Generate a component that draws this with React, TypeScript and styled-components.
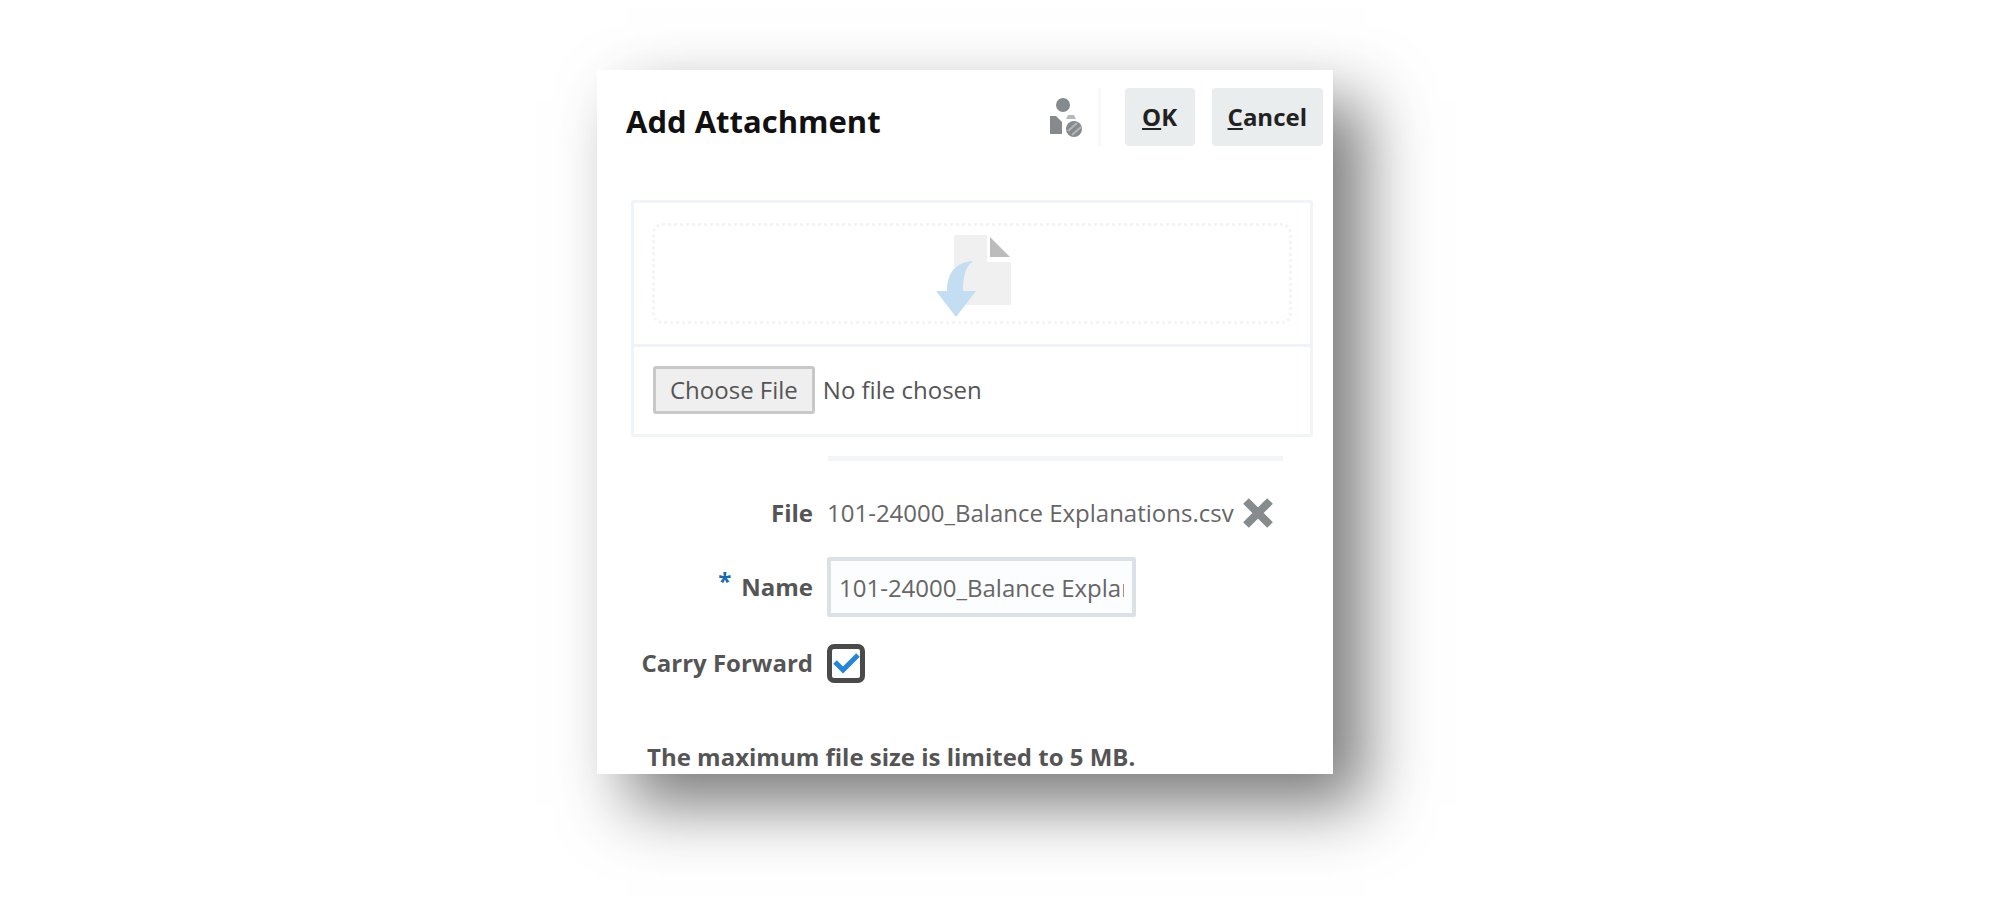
import React, { useRef, useState } from "react";
import styled, { createGlobalStyle } from "styled-components";

const GlobalStyle = createGlobalStyle`
  *, *::before, *::after { box-sizing: border-box; }
  body {
    margin: 0;
    background: #fff;
    color: #555;
    font-family: "Open Sans", "Noto Sans", sans-serif;
    font-size: 24px;
    line-height: 32px;
  }
  button, input { font: inherit; color: inherit; }
`;

const Page = styled.main`
  display: grid;
  grid-template-columns: 597fr 736fr 667fr;
  padding: 70px 0 140px;
`;

const Dialog = styled.section`
  grid-column: 2;
  background: #fff;
  padding-bottom: 1px;
  box-shadow: 31px 31px 62px rgba(51, 51, 51, 0.65);
`;

const Header = styled.header`
  display: flex;
  align-items: center;
  padding: 18px 10px 0 29px;
`;

const Title = styled.h1`
  flex: 1;
  margin: 0;
  padding-top: 8px;
  color: #111;
  font-size: 31px;
  line-height: 40px;
  font-weight: 700;
`;

const HeaderIcon = styled.svg`
  width: 36px;
  height: 44px;
  margin: 4px 14px 0 0;
`;

const Separator = styled.span`
  width: 3px;
  height: 58px;
  margin-right: 24px;
  background: #f7f8f9;
`;

const ActionButton = styled.button`
  height: 58px;
  min-width: 70px;
  padding: 0 16px;
  border: 0;
  border-radius: 4px;
  background: #e9edee;
  color: #222;
  font-weight: 700;

  & + & { margin-left: 17px; }
`;

const Upload = styled.div`
  margin: 54px 20px 0 34px;
  border: 3px solid #f0f3f7;
  border-radius: 3px;
`;

const DropZone = styled.div`
  display: flex;
  justify-content: center;
  margin: 20px 18px;
  height: 101px;
  padding: 8px 0 0 6px;
  border: 3px dotted #f2f5f8;
  border-radius: 10px;
`;

const DropIcon = styled.svg`
  width: 78px;
  height: 84px;
`;

const Picker = styled.div`
  display: flex;
  align-items: center;
  gap: 8px;
  padding: 19px 19px 20px;
  border-top: 3px solid #f0f3f7;
`;

const ChooseButton = styled.button`
  height: 48px;
  padding: 0 14px;
  border: 3px solid #c8c8c8;
  border-radius: 3px;
  background: #efefef;
`;

const Rule = styled.hr`
  margin: 19px 50px 8px 231px;
  border: 0;
  border-top: 5px solid #f3f5f7;
`;

const Fields = styled.div`
  display: grid;
  grid-template-columns: 216px 1fr;
  column-gap: 14px;
  align-items: center;
`;

const Label = styled.label`
  text-align: right;
  font-weight: 700;
`;

const Required = styled.span`
  position: relative;
  top: -6px;
  margin-right: 10px;
  color: #1668b0;
`;

const Row = styled.div<{ $height: number }>`
  display: flex;
  align-items: center;
  height: ${(p) => p.$height}px;
  color: #666;
`;

const RemoveButton = styled.button`
  display: flex;
  margin-left: 8px;
  padding: 0;
  border: 0;
  background: none;
`;

const NameInput = styled.input`
  width: 309px;
  height: 60px;
  padding: 0 8px;
  border: 4px solid #dbe2e6;
  border-radius: 2px;
  background: #fcfdff;
  color: #666;
`;

const CheckBox = styled.span`
  position: relative;
  display: flex;

  input {
    appearance: none;
    width: 38px;
    height: 39px;
    margin: 0;
    border: 5px solid #4a4a4a;
    border-radius: 7px;
    background: #fff;
  }

  svg {
    position: absolute;
    inset: 0;
    pointer-events: none;
  }
`;

const Note = styled.p`
  margin: 32px 0 0 50px;
  font-weight: 700;
`;

export default function App() {
  const fileRef = useRef<HTMLInputElement>(null);
  const [chosen, setChosen] = useState("No file chosen");
  const [carry, setCarry] = useState(true);

  return (
    <>
      <GlobalStyle />
      <Page>
        <Dialog role="dialog" aria-labelledby="dialog-title">
          <Header>
            <Title id="dialog-title">Add Attachment</Title>
            <HeaderIcon viewBox="0 0 36 44" fill="#868a8d" aria-hidden="true">
              <circle cx="15" cy="8" r="7" />
              <path d="M2 19h6l6 6v12H2z" />
              <path d="M18 22l2-4h6l2 4z" opacity=".6" />
              <circle cx="26" cy="32" r="8" />
              <path d="M20 34l9-8M24 38l9-8" stroke="#b4b7b9" strokeWidth="2" />
            </HeaderIcon>
            <Separator />
            <ActionButton type="button"><u>O</u>K</ActionButton>
            <ActionButton type="button"><u>C</u>ancel</ActionButton>
          </Header>

          <Upload>
            <DropZone>
              <DropIcon viewBox="0 0 78 84" aria-hidden="true">
                <path d="M18 1h33v27h24v43H18z" fill="#f0f0f0" />
                <path d="M54 3l20 20H54z" fill="#bcbcbc" />
                <path d="M37 27C19 28 11 40 11 57H0l20 26 20-26H27c0-14 2-24 10-30z" fill="#c3ddf2" />
              </DropIcon>
            </DropZone>
            <Picker>
              <ChooseButton type="button" onClick={() => fileRef.current?.click()}>
                Choose File
              </ChooseButton>
              <span>{chosen}</span>
              <input
                ref={fileRef}
                type="file"
                hidden
                aria-label="Attachment file"
                onChange={(e) => setChosen(e.target.files?.[0]?.name ?? "No file chosen")}
              />
            </Picker>
          </Upload>

          <Rule />

          <Fields>
            <Label as="span">File</Label>
            <Row $height={88}>
              101-24000_Balance Explanations.csv
              <RemoveButton type="button" aria-label="Remove file">
                <svg width="32" height="32" viewBox="0 0 32 32" aria-hidden="true">
                  <path d="M4 4l24 24M28 4L4 28" stroke="#868b8e" strokeWidth="8" />
                </svg>
              </RemoveButton>
            </Row>
            <Label htmlFor="name"><Required>*</Required>Name</Label>
            <Row $height={60}>
              <NameInput id="name" defaultValue="101-24000_Balance Explanations.csv" />
            </Row>
            <Label htmlFor="carry">Carry Forward</Label>
            <Row $height={92}>
              <CheckBox>
                <input id="carry" type="checkbox" checked={carry} onChange={(e) => setCarry(e.target.checked)} />
                {carry && (
                  <svg width="38" height="39" viewBox="0 0 38 39" fill="none" aria-hidden="true">
                    <path d="M8 18l8 8 15-15" stroke="#2186dc" strokeWidth="5" />
                  </svg>
                )}
              </CheckBox>
            </Row>
          </Fields>

          <Note>The maximum file size is limited to 5 MB.</Note>
        </Dialog>
      </Page>
    </>
  );
}
